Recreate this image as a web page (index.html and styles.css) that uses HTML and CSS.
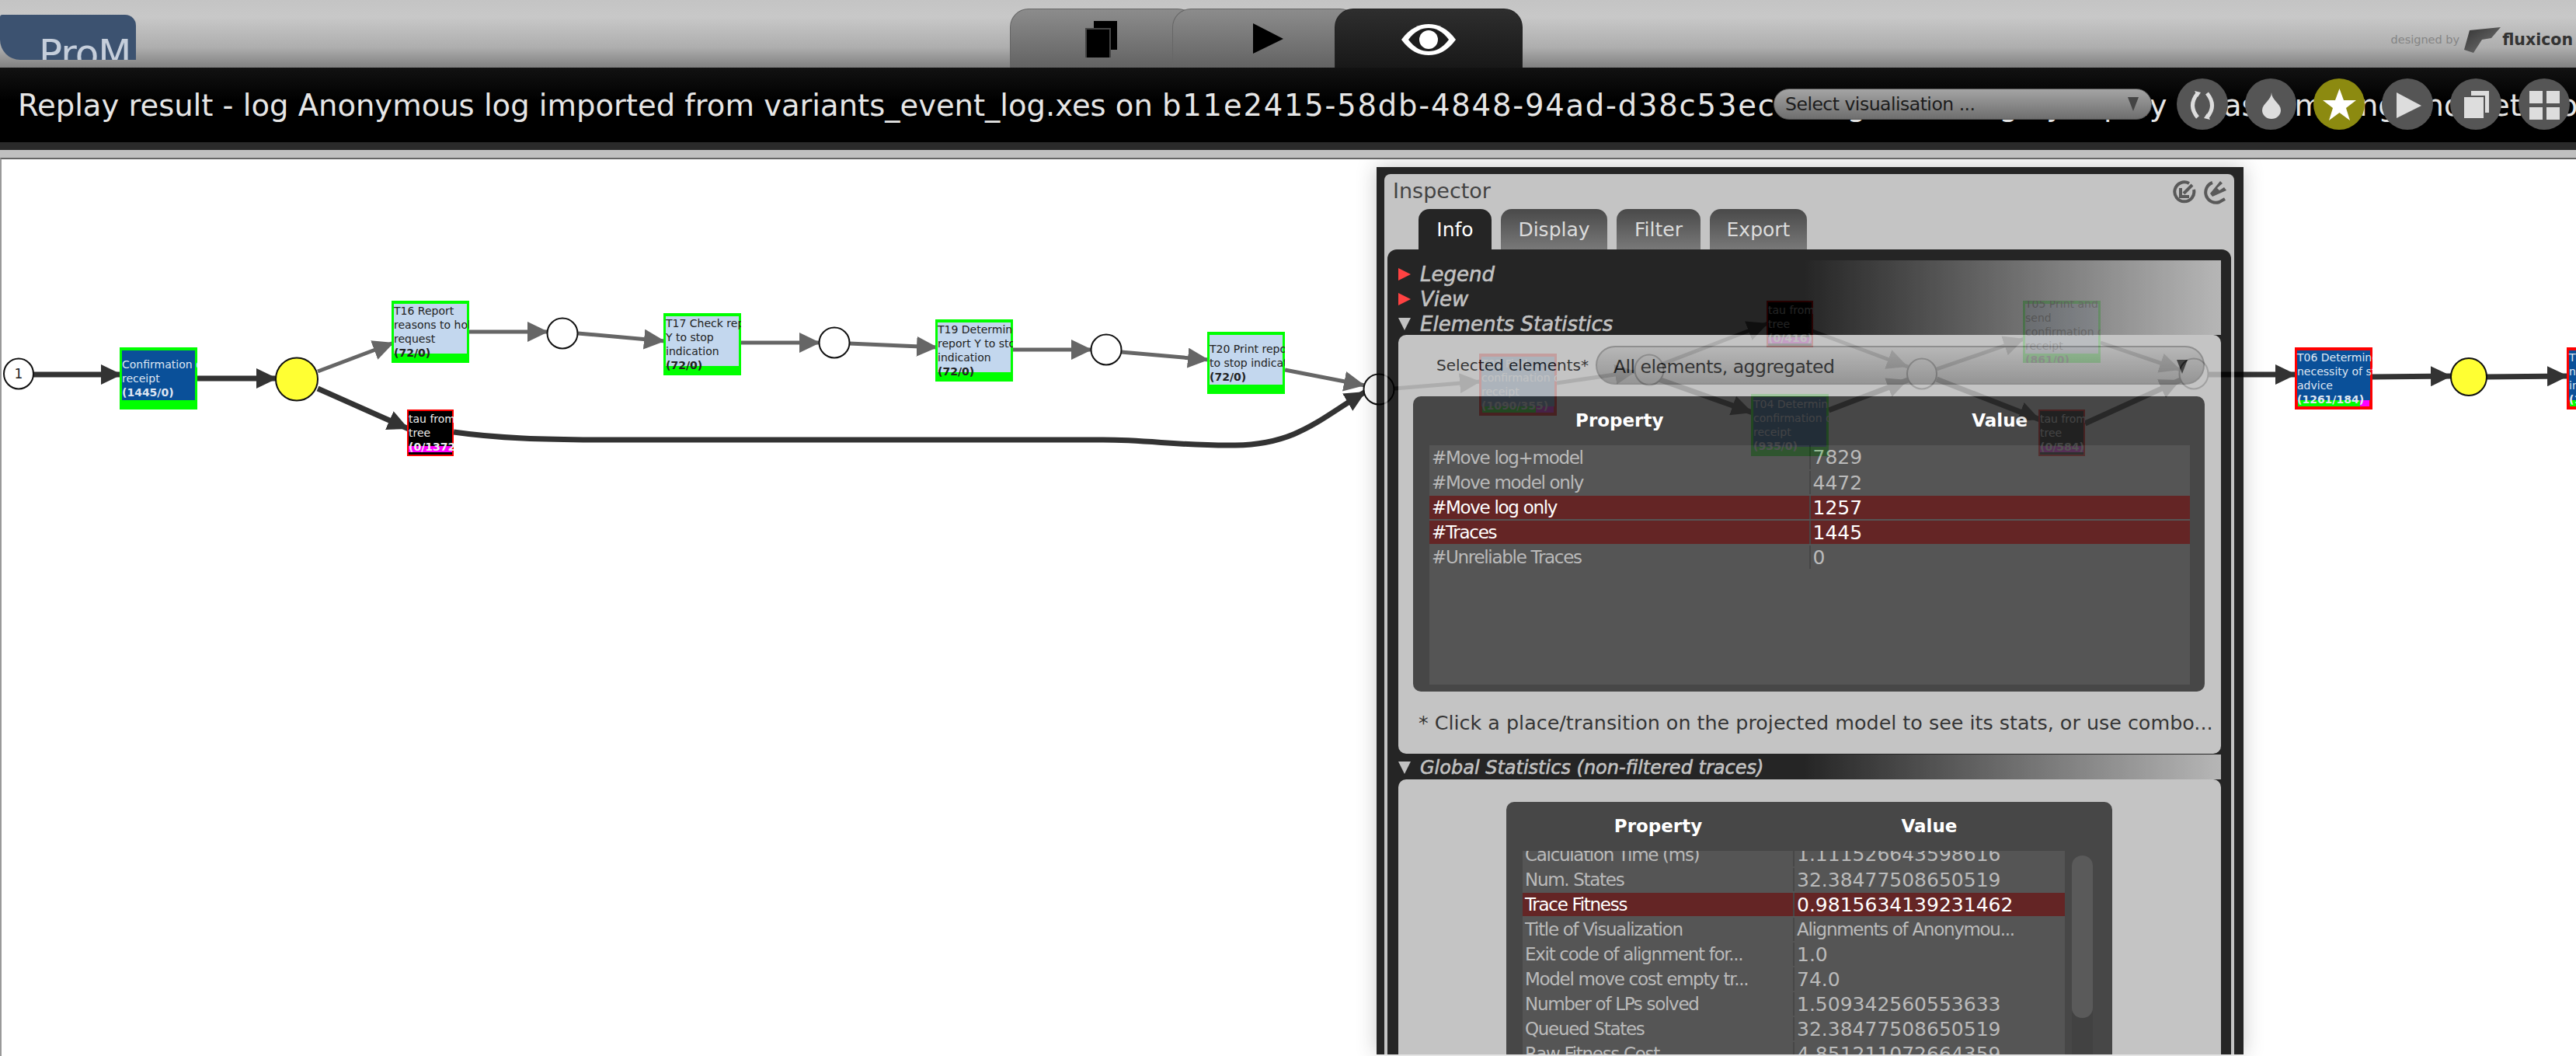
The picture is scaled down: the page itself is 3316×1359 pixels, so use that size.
FILE: index.html
```html
<!DOCTYPE html>
<html lang="en">
<head>
    <meta charset="UTF-8">
    <title>ProM - Replay result</title>
    <link rel="stylesheet" href="styles.css">
</head>
<body>
    <header class="topbar">
        <div class="logo">ProM</div>
        <nav class="views">
            <div class="view-tab">
                <svg width="42" height="48" viewBox="0 0 42 48">
                    <rect x="11" y="1" width="30" height="37" fill="#000"/>
                    <rect x="0" y="10" width="33" height="38" fill="#444"/>
                    <rect x="2" y="12" width="29" height="36" fill="#000"/>
                </svg>
            </div>
            <div class="view-tab">
                <svg width="40" height="40" viewBox="0 0 40 40"><polygon points="0,0 39,20 0,39" fill="#000"/></svg>
            </div>
            <div class="view-tab view-tab-active">
                <svg width="72" height="42" viewBox="0 0 72 42">
                    <path d="M1 21C12 6 24 1 36 1C48 1 60 6 71 21C60 36 48 41 36 41C24 41 12 36 1 21Z" fill="#fff"/>
                    <path d="M10 21C18 10 27 6 36 6C45 6 54 10 62 21C54 32 45 36 36 36C27 36 18 32 10 21Z" fill="#1d1d1d"/>
                    <ellipse cx="36" cy="21" rx="12" ry="12" fill="#fff"/>
                </svg>
            </div>
        </nav>
        <div class="brand">
            <span class="brand-by">designed by</span>
            <svg width="50" height="36" viewBox="0 0 50 36">
                <defs>
                    <linearGradient id="flag" x1="0" y1="0" x2="1" y2="1">
                        <stop offset="0" stop-color="#333"/>
                        <stop offset="1" stop-color="#777"/>
                    </linearGradient>
                </defs>
                <path d="M8 6L48 2L36 16L24 18L13 35L1 31Z" fill="url(#flag)"/>
            </svg>
            <span class="brand-name">fluxicon</span>
        </div>
    </header>

    <div class="titlebar">
        <div class="title">Replay result - log Anonymous log imported from variants_event_log.xes on <span class="title-id">b11e2415-58db-4848-94ad-d38c53ec</span> using of the log by replay on as a mining and net 1 of t</div>
        <div class="title-tools">
            <div class="combo">Select visualisation ...<span class="combo-arrow"></span></div>
            <div class="round-btn">
                <svg viewBox="0 0 66 66"><path d="M27 19Q14 35 27 50M39 19Q52 35 39 50" fill="none" stroke="#ddd" stroke-width="5"/><path d="M23 16L31 18L27 24ZM43 53L35 51L39 45Z" fill="#ddd"/></svg>
            </div>
            <div class="round-btn">
                <svg viewBox="0 0 66 66"><path d="M34 18C34 28 46 32 46 41A12 11 0 0 1 22 41C22 32 34 28 34 18Z" fill="#ddd"/></svg>
            </div>
            <div class="round-btn round-btn-on">
                <svg viewBox="0 0 66 66"><polygon points="33.5,13 39,28 55,28 42,38 47,54 33.5,44 20,54 25,38 12,28 28,28" fill="#fff"/></svg>
            </div>
            <div class="round-btn">
                <svg viewBox="0 0 66 66"><polygon points="19,18 51,35 19,51" fill="#ddd"/></svg>
            </div>
            <div class="round-btn">
                <svg viewBox="0 0 66 66"><rect x="27" y="16" width="23" height="28" fill="#ddd"/><rect x="16" y="22" width="29" height="31" fill="#555"/><rect x="18" y="24" width="25" height="27" fill="#ddd"/></svg>
            </div>
            <div class="round-btn">
                <svg viewBox="0 0 66 66"><rect x="14" y="16" width="17" height="16" fill="#ddd"/><rect x="36" y="16" width="17" height="16" fill="#ddd"/><rect x="14" y="37" width="17" height="16" fill="#ddd"/><rect x="36" y="37" width="17" height="16" fill="#ddd"/></svg>
            </div>
        </div>
    </div>
    <div class="strip"></div>

    <main class="canvas">
        <svg class="graph" width="3316" height="1154" viewBox="0 205 3316 1154">
            <defs>
                <marker id="head-dark" markerUnits="userSpaceOnUse" markerWidth="28" markerHeight="26" refX="27" refY="13" orient="auto">
                    <polygon points="0,0 27,13 0,26" fill="#333"/>
                </marker>
                <marker id="head-gray" markerUnits="userSpaceOnUse" markerWidth="28" markerHeight="26" refX="27" refY="13" orient="auto">
                    <polygon points="0,0 27,13 0,26" fill="#666"/>
                </marker>
            </defs>

            <g class="arc-dark">
                <path d="M43 484L157 484"/>
                <path d="M254 489L357 489"/>
                <path d="M409 502L526 554"/>
                <path d="M584 558C640 566 700 568 780 568L1420 568C1480 568 1520 576 1590 575C1670 574 1700 540 1758 506"/>
                <path d="M2135 490L2256 533"/>
                <path d="M2354 530L2456 491"/>
                <path d="M2493 490L2626 542"/>
                <path d="M2684 547L2807 491"/>
                <path d="M2842 484L2956 484"/>
                <path d="M3054 487L3156 486"/>
                <path d="M3201 487L3306 486"/>
            </g>
            <g class="arc-gray">
                <path d="M409 480L507 443"/>
                <path d="M604 429L706 429"/>
                <path d="M744 431L856 441"/>
                <path d="M953 443L1056 443"/>
                <path d="M1093 444L1207 449"/>
                <path d="M1304 452L1406 452"/>
                <path d="M1443 455L1556 465"/>
                <path d="M1654 478L1757 498"/>
                <path d="M1795 502L1906 493"/>
                <path d="M2004 495L2106 480"/>
                <path d="M2141 470L2276 418"/>
                <path d="M2333 428L2456 474"/>
                <path d="M2493 477L2606 438"/>
                <path d="M2704 443L2807 478"/>
            </g>

            <g class="places">
                <ellipse cx="24" cy="483" rx="19" ry="19.5"/>
                <ellipse class="place-on" cx="382" cy="490" rx="27" ry="27.5"/>
                <ellipse cx="724" cy="431" rx="19.5" ry="19.5"/>
                <ellipse cx="1074" cy="443" rx="19.5" ry="19.5"/>
                <ellipse cx="1424" cy="452" rx="19.5" ry="19.5"/>
                <ellipse cx="1775" cy="503" rx="19.5" ry="19.5"/>
                <ellipse cx="2123" cy="478" rx="18.5" ry="19.5"/>
                <ellipse cx="2474" cy="483" rx="19" ry="19.5"/>
                <ellipse cx="2824" cy="483" rx="18.5" ry="19.5"/>
                <ellipse class="place-on" cx="3178" cy="487" rx="23" ry="24"/>
            </g>
            <text class="token" x="24" y="489" text-anchor="middle">1</text>
        </svg>

        <div class="node node-ok fill-dark n-confirm"><span>Confirmation of</span><span>receipt</span><b>(1445/0)</b></div>
        <div class="node node-ok fill-light n-t16"><span>T16 Report</span><span>reasons to hold</span><span>request</span><b>(72/0)</b></div>
        <div class="node node-ok fill-light n-t17"><span>T17 Check report</span><span>Y to stop</span><span>indication</span><b>(72/0)</b></div>
        <div class="node node-ok fill-light n-t19"><span>T19 Determine</span><span>report Y to stop</span><span>indication</span><b>(72/0)</b></div>
        <div class="node node-ok fill-light n-t20"><span>T20 Print report</span><span>to stop indication</span><b>(72/0)</b></div>
        <div class="node node-tau n-tau1"><span>tau from</span><span>tree</span><b>(0/1372)</b></div>

        <div class="node node-bad fill-mid n-t03"><span>T03 Find</span><span>confirmation of</span><span>receipt</span><b>(1090/355)</b>
            <div class="bar"><i class="bar-ok" style="flex:1090"></i><i class="bar-miss" style="flex:355"></i></div>
        </div>
        <div class="node node-tau n-tau2"><span>tau from</span><span>tree</span><b>(0/416)</b></div>
        <div class="node node-ok fill-dark n-t04"><span>T04 Determine</span><span>confirmation of</span><span>receipt</span><b>(935/0)</b></div>
        <div class="node node-ok fill-light n-t05"><span>T05 Print and</span><span>send</span><span>confirmation of</span><span>receipt</span><b>(861/0)</b></div>
        <div class="node node-tau n-tau3"><span>tau from</span><span>tree</span><b>(0/584)</b></div>

        <div class="node node-bad fill-dark n-t06"><span>T06 Determine</span><span>necessity of stop</span><span>advice</span><b>(1261/184)</b>
            <div class="bar"><i class="bar-ok" style="flex:1261"></i><i class="bar-miss" style="flex:184"></i></div>
        </div>
        <div class="node node-bad fill-dark n-t07"><span>T07 Inform</span><span>necessity of</span><span>indication</span><b>(1261/184)</b>
            <div class="bar"><i class="bar-ok" style="flex:1261"></i><i class="bar-miss" style="flex:184"></i></div>
        </div>

        <aside class="inspector">
            <div class="inspector-window">
                <div class="inspector-head">
                    <span class="inspector-title">Inspector</span>
                    <div class="inspector-icons">
                        <svg width="31" height="32" viewBox="0 0 31 32">
                            <path d="M21 5A12.5 12.5 0 1 0 27 13" fill="none" stroke="#3d3d3d" stroke-width="4"/>
                            <path d="M25 7L14 18M10 11V22H21" fill="none" stroke="#3d3d3d" stroke-width="4"/>
                        </svg>
                        <svg width="32" height="32" viewBox="0 0 32 32">
                            <path d="M12 4A13 13 0 0 0 21 29L28 25" fill="none" stroke="#3d3d3d" stroke-width="4"/>
                            <path d="M22 2L9 18L12 22L30 14L27 10L21 14L18 11L25 5Z" fill="#3d3d3d"/>
                        </svg>
                    </div>
                </div>
                <div class="tabs">
                    <div class="tab tab-on">Info</div>
                    <div class="tab tab-display">Display</div>
                    <div class="tab tab-filter">Filter</div>
                    <div class="tab tab-export">Export</div>
                </div>

                <div class="inspector-body">
                    <div class="section-heads">
                        <div class="section-head"><span class="arrow-right"></span>Legend</div>
                        <div class="section-head"><span class="arrow-right"></span>View</div>
                        <div class="section-head"><span class="arrow-down"></span>Elements Statistics</div>
                    </div>
                    <section class="panel panel-elements">
                        <div class="picker">
                            <label class="picker-label">Selected elements*</label>
                            <div class="picker-combo">All elements, aggregated<span class="combo-arrow"></span></div>
                        </div>
                        <div class="card card-elements">
                            <div class="card-head"><span>Property</span><span>Value</span></div>
                            <div class="card-body">
                                <table class="props">
                                    <tr><td>#Move log+model</td><td>7829</td></tr>
                                    <tr><td>#Move model only</td><td>4472</td></tr>
                                    <tr class="hit"><td>#Move log only</td><td>1257</td></tr>
                                    <tr class="hit"><td>#Traces</td><td>1445</td></tr>
                                    <tr><td>#Unreliable Traces</td><td>0</td></tr>
                                </table>
                            </div>
                        </div>
                        <p class="note">* Click a place/transition on the projected model to see its stats, or use combo...</p>
                    </section>

                    <div class="section-heads section-heads-global">
                        <div class="section-head"><span class="arrow-down"></span>Global Statistics (non-filtered traces)</div>
                    </div>
                    <section class="panel panel-global">
                        <div class="card card-global">
                            <div class="card-head"><span>Property</span><span>Value</span></div>
                            <div class="card-scroll">
                                <div class="card-body">
                                    <table class="props">
                                        <tr><td>Calculation Time (ms)</td><td>1.111526643598616</td></tr>
                                        <tr><td>Num. States</td><td>32.38477508650519</td></tr>
                                        <tr class="hit"><td>Trace Fitness</td><td>0.9815634139231462</td></tr>
                                        <tr><td>Title of Visualization</td><td class="cell-text">Alignments of Anonymou...</td></tr>
                                        <tr><td>Exit code of alignment for...</td><td>1.0</td></tr>
                                        <tr><td>Model move cost empty tr...</td><td>74.0</td></tr>
                                        <tr><td>Number of LPs solved</td><td>1.509342560553633</td></tr>
                                        <tr><td>Queued States</td><td>32.38477508650519</td></tr>
                                        <tr><td>Raw Fitness Cost</td><td>4.851211072664359</td></tr>
                                    </table>
                                </div>
                                <div class="scrollbar"><div class="scrollbar-thumb"></div></div>
                            </div>
                        </div>
                    </section>
                </div>
            </div>
        </aside>
    </main>
</body>
</html>
```

FILE: styles.css
```css
html, body {
    height: 100%;
}
body {
    margin: 0;
    width: 3316px;
    height: 1359px;
    overflow: hidden;
    display: flex;
    flex-direction: column;
    font-family: "DejaVu Sans", sans-serif;
    background: #c0c0c0;
}

/* top bar */
.topbar {
    height: 87px;
    display: flex;
    align-items: flex-end;
    background: linear-gradient(#c4c4c4 0, #c8c8c8 25%, #aeaeae 70%, #808080 100%);
}
.logo {
    width: 175px;
    height: 58px;
    margin-bottom: 10px;
    box-sizing: border-box;
    padding: 20px 0 0 50px;
    overflow: hidden;
    background: #3c5270;
    border-radius: 3px 14px 0 26px;
    color: #c5cedb;
    font-size: 50px;
    line-height: 60px;
    letter-spacing: -1px;
}
.views {
    display: flex;
    margin-left: 1125px;
}
.view-tab {
    width: 240px;
    height: 76px;
    margin-right: -31px;
    box-sizing: border-box;
    padding-top: 14px;
    display: flex;
    justify-content: center;
    align-items: flex-start;
    background: linear-gradient(#8c8c8c, #636363);
    border: 1px solid #666;
    border-bottom: none;
    border-radius: 24px 24px 0 0;
}
.view-tab:nth-child(1) svg {
    margin-right: 4px;
}
.view-tab:nth-child(2) {
    padding-top: 18px;
}
.view-tab:nth-child(2) svg {
    margin-left: 8px;
}
.view-tab-active {
    width: 242px;
    margin-right: 0;
    padding-top: 18px;
    background: linear-gradient(#2e2e2e, #181818);
    border-color: #222;
}
.brand {
    margin-left: auto;
    margin-right: 4px;
    margin-bottom: 18px;
    display: flex;
    align-items: center;
}
.brand-by {
    font-size: 14.5px;
    color: #858585;
    margin-right: 5px;
}
.brand-name {
    font-size: 20.5px;
    font-weight: bold;
    color: #333;
}

/* title bar */
.titlebar {
    position: relative;
    height: 96px;
    background: linear-gradient(#121212, #000 45%);
}
.title {
    padding-left: 23px;
    height: 96px;
    line-height: 97px;
    overflow: hidden;
    white-space: nowrap;
    color: #e6e6e6;
    font-size: 38.5px;
}
.title-id {
    letter-spacing: 1.8px;
}
.title-tools {
    position: absolute;
    top: 14px;
    right: 8px;
    display: flex;
    align-items: center;
    gap: 22px;
}
.combo {
    position: relative;
    width: 487px;
    height: 40px;
    margin-right: 10px;
    box-sizing: border-box;
    padding-left: 14px;
    line-height: 38px;
    font-size: 23.5px;
    letter-spacing: -0.5px;
    color: #1c1c1c;
    background: linear-gradient(#a4a4a4, #6e6e6e);
    border: 1px solid #555;
    border-radius: 20px;
}
.combo-arrow {
    position: absolute;
    right: 16px;
    top: 10px;
    border-left: 7px solid transparent;
    border-right: 7px solid transparent;
    border-top: 18px solid #444;
}
.round-btn {
    width: 66px;
    height: 66px;
    border-radius: 50%;
    background: #555;
}
.round-btn svg {
    display: block;
}
.round-btn-on {
    background: #8c8a10;
}
.strip {
    height: 10px;
    background: #2a2a2a;
}

/* graph */
.canvas {
    position: relative;
    flex: 1;
    margin-top: 10px;
    background: #fff;
    border-top: 2px solid #666;
    border-left: 2px solid #999;
    overflow: hidden;
}
.graph {
    position: absolute;
    left: -2px;
    top: -2px;
}
.arc-dark path, .arc-gray path {
    fill: none;
}
.arc-dark path {
    stroke: #333;
    stroke-width: 7;
    marker-end: url(#head-dark);
}
.arc-gray path {
    stroke: #666;
    stroke-width: 5;
    marker-end: url(#head-gray);
}
.places ellipse {
    fill: #fff;
    stroke: #111;
    stroke-width: 2;
}
.places .place-on {
    fill: #ffff33;
}
.token {
    font-size: 17px;
    fill: #222;
}

.node {
    position: absolute;
    z-index: 0;
    width: 100px;
    height: 80px;
    padding-left: 3px;
    box-sizing: border-box;
    display: flex;
    flex-direction: column;
    justify-content: center;
    overflow: hidden;
    white-space: nowrap;
    font-size: 14px;
    line-height: 18px;
}
.node::before {
    content: "";
    position: absolute;
    left: 3px;
    right: 3px;
    top: 4px;
    height: 64px;
}
.node span, .node b {
    position: relative;
    z-index: 1;
}
.node-ok {
    background: #00ff00;
}
.node-bad {
    background: #ff0000;
}
.fill-dark { color: #dfe6f2; }
.fill-dark::before { background: #0a5099; }
.fill-light { color: #222; }
.fill-light::before { background: #c3d7ee; }
.fill-mid { color: #eef2f8; }
.fill-mid::before { background: #5f8fc4; }
.node-tau {
    width: 60px;
    height: 60px;
    padding-left: 2px;
    background: #ff0000;
    color: #eee;
}
.node-tau::before {
    left: 2px;
    right: 2px;
    top: 2px;
    height: 56px;
    background: linear-gradient(#000 80%, #ff00ff 80%, #ff00ff 94%, #000 94%);
}
.bar {
    position: absolute;
    left: 4px;
    right: 4px;
    top: 68px;
    height: 8px;
    display: flex;
}
.bar-ok { background: #00ff00; }
.bar-miss { background: #ff00ff; }

.n-confirm { left: 152px; top: 242px; }
.n-t16 { left: 502px; top: 182px; }
.n-t17 { left: 852px; top: 198px; }
.n-t19 { left: 1202px; top: 206px; }
.n-t20 { left: 1552px; top: 222px; }
.n-tau1 { left: 522px; top: 322px; }
.n-t03 { left: 1902px; top: 250px; }
.n-tau2 { left: 2272px; top: 182px; }
.n-t04 { left: 2252px; top: 302px; }
.n-t05 { left: 2602px; top: 182px; }
.n-tau3 { left: 2622px; top: 322px; }
.n-t06 { left: 2952px; top: 242px; }
.n-t07 { left: 3302px; top: 242px; }

/* inspector, the whole thing is see through */
.inspector {
    position: absolute;
    z-index: 1;
    left: 1770px;
    top: 10px;
    width: 1116px;
    height: 1142px;
    box-sizing: border-box;
    padding: 9px 12px 0 10px;
    overflow: hidden;
    background: #000;
    opacity: 0.85;
    box-shadow: 0 0 24px rgba(0, 0, 0, 0.25);
}
.inspector-window {
    height: 100%;
    padding: 0 4px;
    background: #bababa;
    border-radius: 8px 8px 0 0;
}
.inspector-head {
    height: 45px;
    display: flex;
    justify-content: space-between;
    padding: 0 4px 0 7px;
}
.inspector-title {
    font-size: 27px;
    line-height: 43px;
    color: #232323;
}
.inspector-icons {
    display: flex;
    gap: 8px;
    padding-top: 7px;
}
.tabs {
    display: flex;
    padding-left: 40px;
    height: 52px;
    gap: 12px;
}
.tab {
    width: 94px;
    text-align: center;
    font-size: 25px;
    line-height: 54px;
    color: #d7d7d7;
    background: linear-gradient(#2a2a2a, #626262);
    border-radius: 14px 14px 0 0;
}
.tab-on {
    background: #000;
    color: #fff;
}
.tab-display { width: 137px; }
.tab-filter { width: 108px; }
.tab-export { width: 125px; }

.inspector-body {
    height: 1036px;
    padding-top: 14px;
    box-sizing: border-box;
    background: #000;
    border-radius: 12px 12px 0 0;
    overflow: hidden;
}
.section-heads {
    margin-right: 13px;
    padding: 2px 0 0 14px;
    height: 96px;
    box-sizing: border-box;
    background: linear-gradient(90deg, #000 50%, #aaa 100%);
}
.section-heads-global {
    margin-top: 1px;
    height: 32px;
}
.section-head {
    height: 32px;
    display: flex;
    align-items: center;
    gap: 12px;
    font-size: 26px;
    font-style: italic;
    -webkit-text-stroke: 0.6px #b8b8b8;
    color: #b8b8b8;
    white-space: nowrap;
}
.section-heads-global .section-head {
    height: 30px;
    font-size: 24px;
}
.arrow-right {
    border-left: 16px solid #ff2222;
    border-top: 8px solid transparent;
    border-bottom: 8px solid transparent;
}
.arrow-down {
    border-top: 16px solid #b8b8b8;
    border-left: 8px solid transparent;
    border-right: 8px solid transparent;
}

.panel {
    margin: 0 13px 0 14px;
    background: #bababa;
    border-radius: 10px;
}
.panel-elements {
    height: 539px;
    box-sizing: border-box;
    padding: 14px 21px 0 19px;
}
.panel-global {
    height: 600px;
    box-sizing: border-box;
    padding-top: 29px;
}
.picker {
    height: 50px;
    display: flex;
    align-items: center;
    gap: 9px;
    padding-left: 30px;
}
.picker-label {
    font-size: 20px;
    color: #111;
    white-space: nowrap;
}
.picker-combo {
    position: relative;
    flex: 1;
    height: 50px;
    box-sizing: border-box;
    padding-left: 21px;
    line-height: 50px;
    font-size: 23.5px;
    letter-spacing: -0.5px;
    color: #111;
    background: linear-gradient(#ababab, #838383);
    border: 2px solid #7c7c7c;
    border-radius: 25px;
}
.picker-combo .combo-arrow {
    right: 20px;
    top: 16px;
    border-top-color: #222;
}

.card {
    background: #272727;
    border-radius: 10px;
    box-sizing: border-box;
}
.card-elements {
    height: 380px;
    margin-top: 15px;
    padding: 0 19px 9px 21px;
}
.card-global {
    width: 780px;
    height: 400px;
    margin-left: 139px;
    padding-left: 21px;
}
.card-head {
    height: 61px;
    padding-bottom: 2px;
    display: flex;
    align-items: center;
    font-size: 23px;
    font-weight: bold;
    color: #fff;
}
.card-head span {
    text-align: center;
}
.card-elements .card-head span {
    width: 50%;
}
.card-global .card-head span {
    width: 349px;
}
.card-body {
    height: 308px;
    background: #383838;
    overflow: hidden;
}
.props {
    width: 100%;
    border-collapse: collapse;
    table-layout: fixed;
    font-size: 25px;
    color: #afafaf;
}
.props td {
    height: 32px;
    box-sizing: border-box;
    padding: 0 3px;
    border-bottom: 2px solid #383838;
    white-space: nowrap;
    overflow: hidden;
}
.props td:first-child, .props .cell-text {
    font-size: 23px;
    letter-spacing: -1.3px;
}
.props td + td {
    border-left: 2px solid #272727;
}
.props .hit td {
    background: #4a0000;
    color: #fff;
}
.note {
    margin: 25px 0 0 7px;
    font-size: 25.4px;
    color: #111;
    white-space: nowrap;
}
.card-scroll {
    display: flex;
    gap: 9px;
}
.card-scroll .card-body {
    width: 698px;
    height: 300px;
}
.card-scroll .props {
    margin-top: -11px;
}
.scrollbar {
    width: 27px;
    height: 300px;
    margin-top: 6px;
    background: #222;
    border-radius: 13px 13px 0 0;
}
.scrollbar-thumb {
    height: 209px;
    background: #3e3e3e;
    border-radius: 13px;
}
```
